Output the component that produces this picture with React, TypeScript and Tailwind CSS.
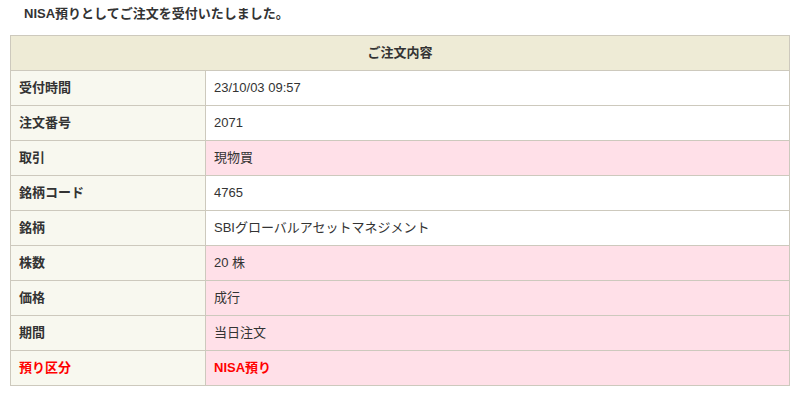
import React from "react";

const rows: { label: string; value: string; pink?: boolean; red?: boolean }[] = [
  { label: "受付時間", value: "23/10/03 09:57" },
  { label: "注文番号", value: "2071" },
  { label: "取引", value: "現物買", pink: true },
  { label: "銘柄コード", value: "4765" },
  { label: "銘柄", value: "SBIグローバルアセットマネジメント" },
  { label: "株数", value: "20 株", pink: true },
  { label: "価格", value: "成行", pink: true },
  { label: "期間", value: "当日注文", pink: true },
  { label: "預り区分", value: "NISA預り", pink: true, red: true },
];

export default function App() {
  return (
    <div
      className="w-[800px] h-[399px] bg-white text-[13px] text-[#333333]"
      style={{ fontFamily: '"Liberation Sans", "Noto Sans CJK JP", sans-serif' }}
    >
      <div className="h-[35px] pl-[24px] pt-[6px] font-bold leading-[16px]">
        NISA預りとしてご注文を受付いたしました。
      </div>
      <div className="ml-[10px] w-[780px] border-t border-l border-r border-[#cdc9bd]">
        <div className="h-[35px] bg-[#eeebd6] border-b border-[#cdc9bd] flex items-center justify-center font-bold">
          ご注文内容
        </div>
        {rows.map((r, i) => (
          <div key={i} className="flex h-[35px] border-b border-[#cdc9bd]">
            <div
              className={`w-[195px] shrink-0 bg-[#f8f8ef] border-r border-[#cdc9bd] pl-2 flex items-center font-bold ${
                r.red ? "text-[#ff0000]" : ""
              }`}
            >
              {r.label}
            </div>
            <div
              className={`flex-1 pl-2 flex items-center ${r.pink ? "bg-[#ffe0e8]" : "bg-white"} ${
                r.red ? "text-[#ff0000] font-bold" : ""
              }`}
            >
              {r.value}
            </div>
          </div>
        ))}
      </div>
    </div>
  );
}
